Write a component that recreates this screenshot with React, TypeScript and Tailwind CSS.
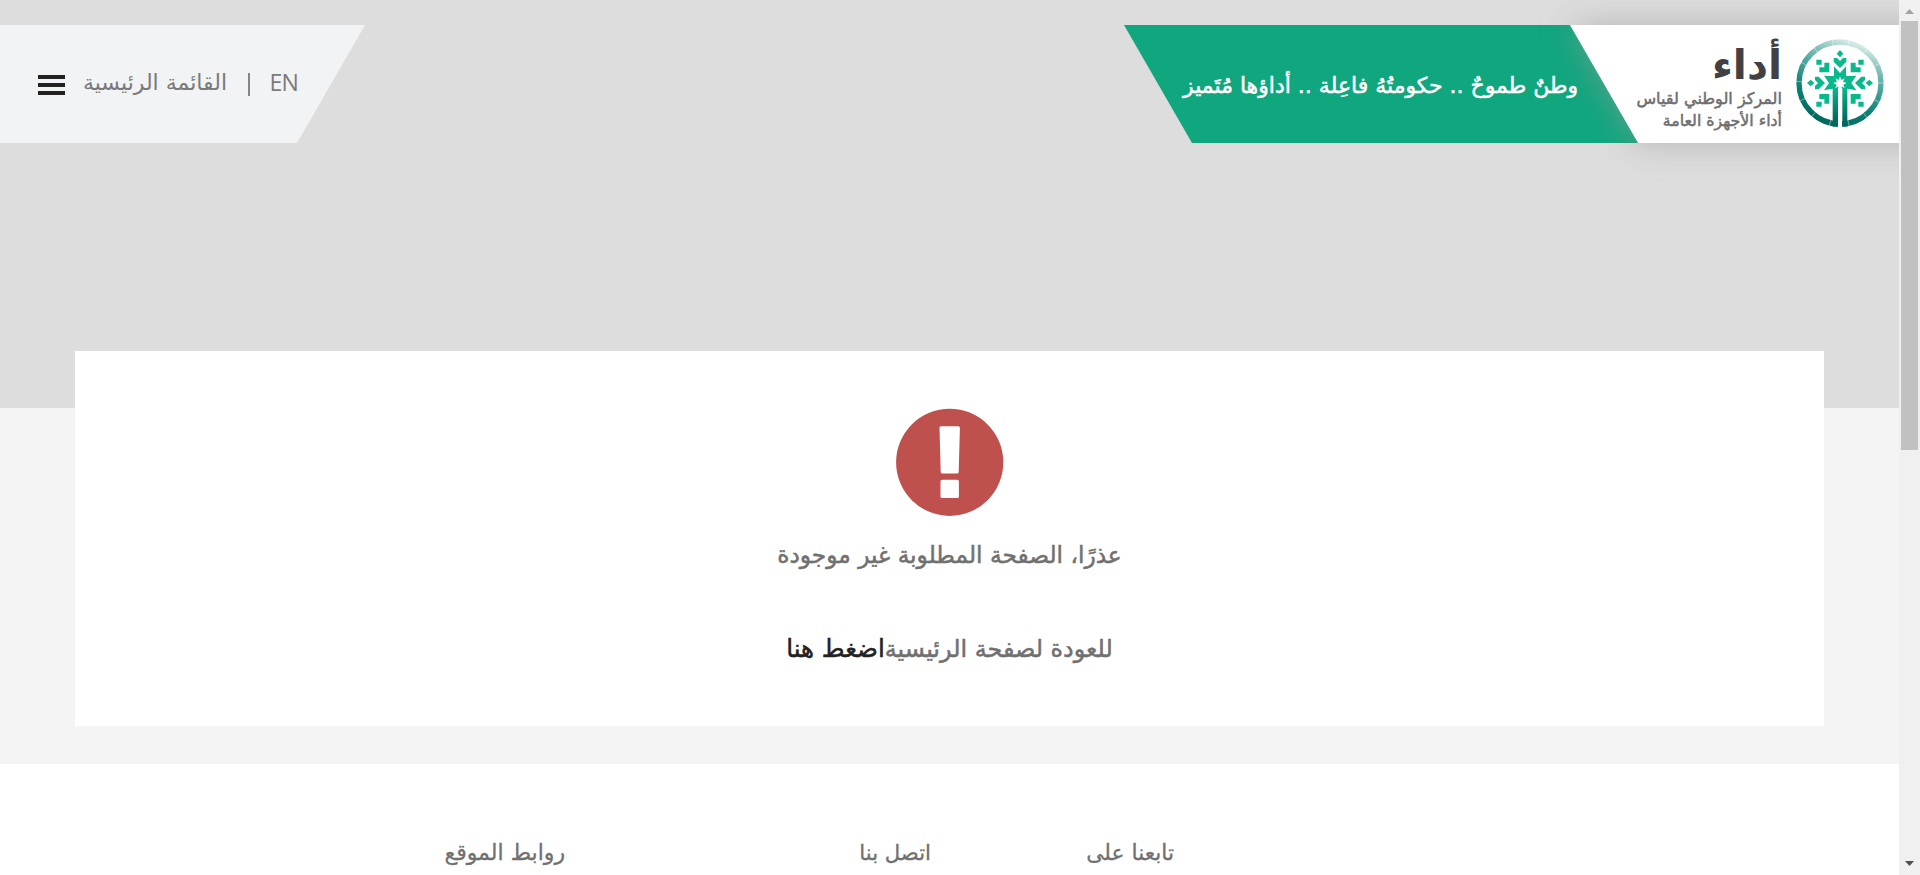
import React from "react";

const RING_TICKS = [12, 38, 64, 90, 116, 142, 168, 194, 220, 246, 272, 298, 324, 350];

function Emblem() {
  return (
    <svg viewBox="45 37 270 270" className="h-[90px] w-[90px] shrink-0" aria-hidden="true">
      <defs>
        <linearGradient id="ring" x1="0.3" y1="1" x2="0.68" y2="0">
          <stop offset="0" stopColor="#00665c" />
          <stop offset="0.3" stopColor="#0b8076" />
          <stop offset="0.6" stopColor="#4aa79d" />
          <stop offset="0.82" stopColor="#8cc5be" />
          <stop offset="1" stopColor="#dcedeb" />
        </linearGradient>
        <linearGradient id="trunk" gradientUnits="userSpaceOnUse" x1="0" y1="185" x2="0" y2="300">
          <stop offset="0" stopColor="#08b98c" />
          <stop offset="0.85" stopColor="#00695f" />
        </linearGradient>
      </defs>
      <circle cx="180" cy="172" r="123" fill="none" stroke="url(#ring)" strokeWidth="16" />
      <g stroke="#fff" strokeOpacity="0.6" strokeWidth="2">
        {RING_TICKS.map((a) => (
          <path key={a} d="M180 40V57" transform={`rotate(${a} 180 172)`} />
        ))}
      </g>
      <path d="M174 180H186V306H174z" fill="#fff" />
      <path
        d="M162 122L180 142L198 122V151L229 150L214 172L229 194L202 189V303H187V190L180 180L174 190V303H158V189L132 194L147 172L132 150L162 151z"
        fill="url(#trunk)"
      />
      <path
        d="M180 152L184 163L194 158L189 168L200 172L190 177L194 188L185 182V190H175V182L166 188L170 177L160 172L171 168L166 158L176 163z"
        fill="#fff"
      />
      <g fill="#08b98c">
        {[-90, 0, 90].map((a) => (
          <g key={a} transform={`rotate(${a} 180 172)`}>
            <path d="M180 73L190 84L180 95L170 84z" />
            <path d="M161 97H171L180 106L189 97H199V108L180 127L161 108z" />
          </g>
        ))}
        <path d="M109 102H125V117H109zM133 111H148V140H118V125H133z" />
        <path d="M251 102H235V117H251zM227 111H212V140H242V125H227z" />
        <path d="M109 243H125V228H109zM133 234H148V205H118V220H133z" />
        <path d="M251 243H235V228H251zM227 234H212V205H242V220H227z" />
      </g>
    </svg>
  );
}

function Header() {
  return (
    <header dir="ltr" className="flex h-[118px] justify-between">
      <nav className="flex h-full w-[365px] items-center bg-[#f1f3f5] pl-[38px] text-[#7a7a7a] [clip-path:polygon(0_0,100%_0,297px_100%,0_100%)]">
        <div className="flex w-[27px] flex-col gap-[3.6px] pt-[2px]">
          <i className="h-[4.3px] bg-[#222]" />
          <i className="h-[4.3px] bg-[#222]" />
          <i className="h-[4.3px] bg-[#222]" />
        </div>
        <a dir="rtl" className="ml-[18px] w-[144px] pb-[3px] text-[22px] leading-8 whitespace-nowrap">القائمة الرئيسية</a>
        <i className="ml-[21px] h-[23px] w-[1.6px] bg-[#858585]" />
        <a className="ml-[20px] pb-[4px] font-['Open_Sans'] text-[23px] leading-8 tracking-[-0.8px]">EN</a>
      </nav>
      <div className="flex h-full w-[775px] overflow-x-clip">
        <div className="flex h-full w-[514px] shrink-0 items-center bg-[#10a67e] pt-[3px] pl-[59px] text-[22px] text-white [clip-path:polygon(0_0,100%_0,100%_100%,68px_100%)]">
          <span dir="rtl" className="whitespace-nowrap [-webkit-text-stroke:0.5px_white]">وطنٌ طموحٌ .. حكومتُهُ فاعِلة .. أداؤها مُتَميز</span>
        </div>
        <div className="-ml-[34px] h-full w-[400px] shrink-0 skew-x-[30deg] bg-white shadow-[0_0_30px_rgba(155,155,155,0.6)]">
          <div className="flex h-full -skew-x-[30deg] items-start pl-[32px]">
            <div dir="rtl" className="w-[146px] shrink-0 pt-[20px] text-right whitespace-nowrap text-[#6d6e70]">
              <div className="h-[41px] text-[41px] leading-[41px] font-bold text-[#414042]">أداء</div>
              <div className="mt-[2px] h-[22px] text-[16.1px] leading-[22px] [-webkit-text-stroke:0.5px_#6d6e70]">المركز الوطني لقياس</div>
              <div className="h-[22px] text-[15.8px] leading-[22px] [-webkit-text-stroke:0.5px_#6d6e70]">أداء الأجهزة العامة</div>
            </div>
            <div className="ml-[13px] mt-[13px]">
              <Emblem />
            </div>
          </div>
        </div>
      </div>
    </header>
  );
}

function Alert() {
  return (
    <svg viewBox="0 0 108 108" className="h-[108px] w-[108px]" aria-hidden="true">
      <circle cx="53.7" cy="54.3" r="53.6" fill="#be504e" />
      <path d="M45 18.3H62.4Q63.9 18.3 63.9 19.8L62.7 64.1Q62.7 65.6 61.2 65.6H46.2Q44.7 65.6 44.7 64.1L43.5 19.8Q43.5 18.3 45 18.3z" fill="#fff" />
      <rect x="44.5" y="71.8" width="18.4" height="18.2" rx="1.6" fill="#fff" />
    </svg>
  );
}

export default function App() {
  return (
    <div dir="ltr" className="flex h-[875px] w-[1920px] overflow-hidden bg-white font-['DejaVu_Sans',sans-serif]">
      <div className="flex h-full w-[1899px] flex-col overflow-hidden">
        <div className="h-[764px] shrink-0 bg-[linear-gradient(to_bottom,#ddd_408px,#f4f4f4_408px)] pt-[25px]">
          <Header />
          <main className="mx-[75px] mt-[208px] flex h-[375px] flex-col items-center bg-white pt-[57px] text-[#707070]">
            <Alert />
            <p dir="rtl" className="mt-[19px] h-10 text-[23.3px] leading-10 whitespace-nowrap [-webkit-text-stroke:0.5px_#707070]">عذرًا، الصفحة المطلوبة غير موجودة</p>
            <p dir="rtl" className="mt-[54px] h-10 text-[23.9px] leading-10 whitespace-nowrap [-webkit-text-stroke:0.5px_#707070]">
              للعودة لصفحة الرئيسية<a className="text-[24.6px] text-[#222] [-webkit-text-stroke:0.5px_#222]">اضغط هنا</a>
            </p>
          </main>
        </div>
        <footer className="flex pt-[69px] pl-[444px] text-[22px] leading-10 whitespace-nowrap text-[#707070] [-webkit-text-stroke:0.3px_#707070]">
          <h3 dir="rtl" className="w-[121px] text-[22px]">روابط الموقع</h3>
          <h3 dir="rtl" className="ml-[294px] w-[72px] text-[21.2px]">اتصل بنا</h3>
          <h3 dir="rtl" className="ml-[155px] w-[88px] text-[21.8px]">تابعنا على</h3>
        </footer>
      </div>
      <div className="flex h-full w-[21px] flex-col items-center justify-between bg-[#f0f0f0] pb-[9px]">
        <div className="flex flex-col items-center pt-[9px]">
          <svg viewBox="0 0 9 5" className="h-[5px] w-[9px]"><path d="M0 5L4.5 0L9 5z" fill="#a3a3a3" /></svg>
          <i className="mt-[7px] h-[429px] w-[17px] bg-[#c1c1c1]" />
        </div>
        <svg viewBox="0 0 9 5" className="h-[5px] w-[9px]"><path d="M0 0L4.5 5L9 0z" fill="#505050" /></svg>
      </div>
    </div>
  );
}
